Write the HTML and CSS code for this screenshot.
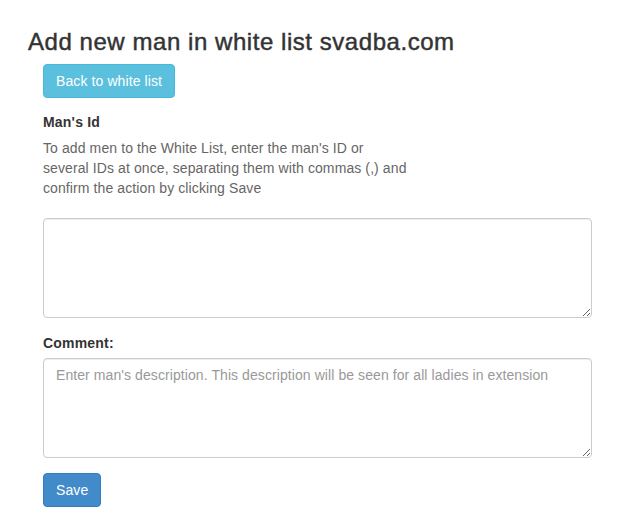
FILE: index.html
```html
<!DOCTYPE html>
<html>
<head>
<meta charset="utf-8">
<link rel="stylesheet" href="styles.css">
</head>
<body>
<div class="page">
  <h3 class="title">Add new man in white list svadba.com</h3>
  <div class="content">
    <a class="btn btn-info" href="#">Back to white list</a>
    <form class="form">
      <div class="group">
        <label class="label" for="ids">Man's Id</label>
        <p class="help">To add men to the White List, enter the man's ID or several IDs at once, separating them with commas (,) and confirm the action by clicking Save</p>
        <textarea id="ids" class="field"></textarea>
      </div>
      <div class="group">
        <label class="label" for="comment">Comment:</label>
        <textarea id="comment" class="field" placeholder="Enter man's description. This description will be seen for all ladies in extension"></textarea>
      </div>
      <button type="button" class="btn btn-primary">Save</button>
    </form>
  </div>
</div>
</body>
</html>
```

FILE: styles.css
```css
* { box-sizing: border-box; }
html, body { margin: 0; padding: 0; background: #fff; }
body {
  font-family: "Liberation Sans", Arial, Helvetica, sans-serif;
  font-size: 14px;
  line-height: 20px;
  letter-spacing: 0.2px;
  color: #333;
}
.page { padding: 29px 0 0 28px; }
.title {
  margin: 0 0 9px 0;
  font-size: 24px;
  line-height: 26.4px;
  font-weight: 400;
  letter-spacing: 0.55px;
  -webkit-text-stroke: 0.45px #333;
  color: #333;
}
.content { padding-left: 15px; width: 564px; }
.btn {
  display: inline-block;
  padding: 6px 12px;
  font-family: inherit;
  font-size: 14px;
  line-height: 20px;
  letter-spacing: 0.1px;
  border: 1px solid transparent;
  border-radius: 4px;
  color: #fff;
  text-decoration: none;
  cursor: pointer;
}
.btn-info { background: #5bc0de; border-color: #46b8da; }
.btn-primary { background: #428bca; border-color: #357ebd; }
.form { margin-top: 14px; }
.group { margin-bottom: 15px; }
.label {
  display: block;
  font-weight: bold;
  margin-bottom: 6px;
}
.help {
  margin: 0 0 20px 0;
  width: 370px;
  letter-spacing: 0.1px;
  color: #666;
}
.field {
  display: block;
  width: 549px;
  height: 100px;
  padding: 6px 12px;
  font-family: inherit;
  font-size: 14px;
  line-height: 20px;
  letter-spacing: 0.08px;
  color: #555;
  border: 1px solid #ccc;
  border-radius: 4px;
  box-shadow: inset 0 1px 1px rgba(0,0,0,0.075);
  resize: both;
}
#comment { margin-top: -1px; }
.field::placeholder { color: #999; }
```
